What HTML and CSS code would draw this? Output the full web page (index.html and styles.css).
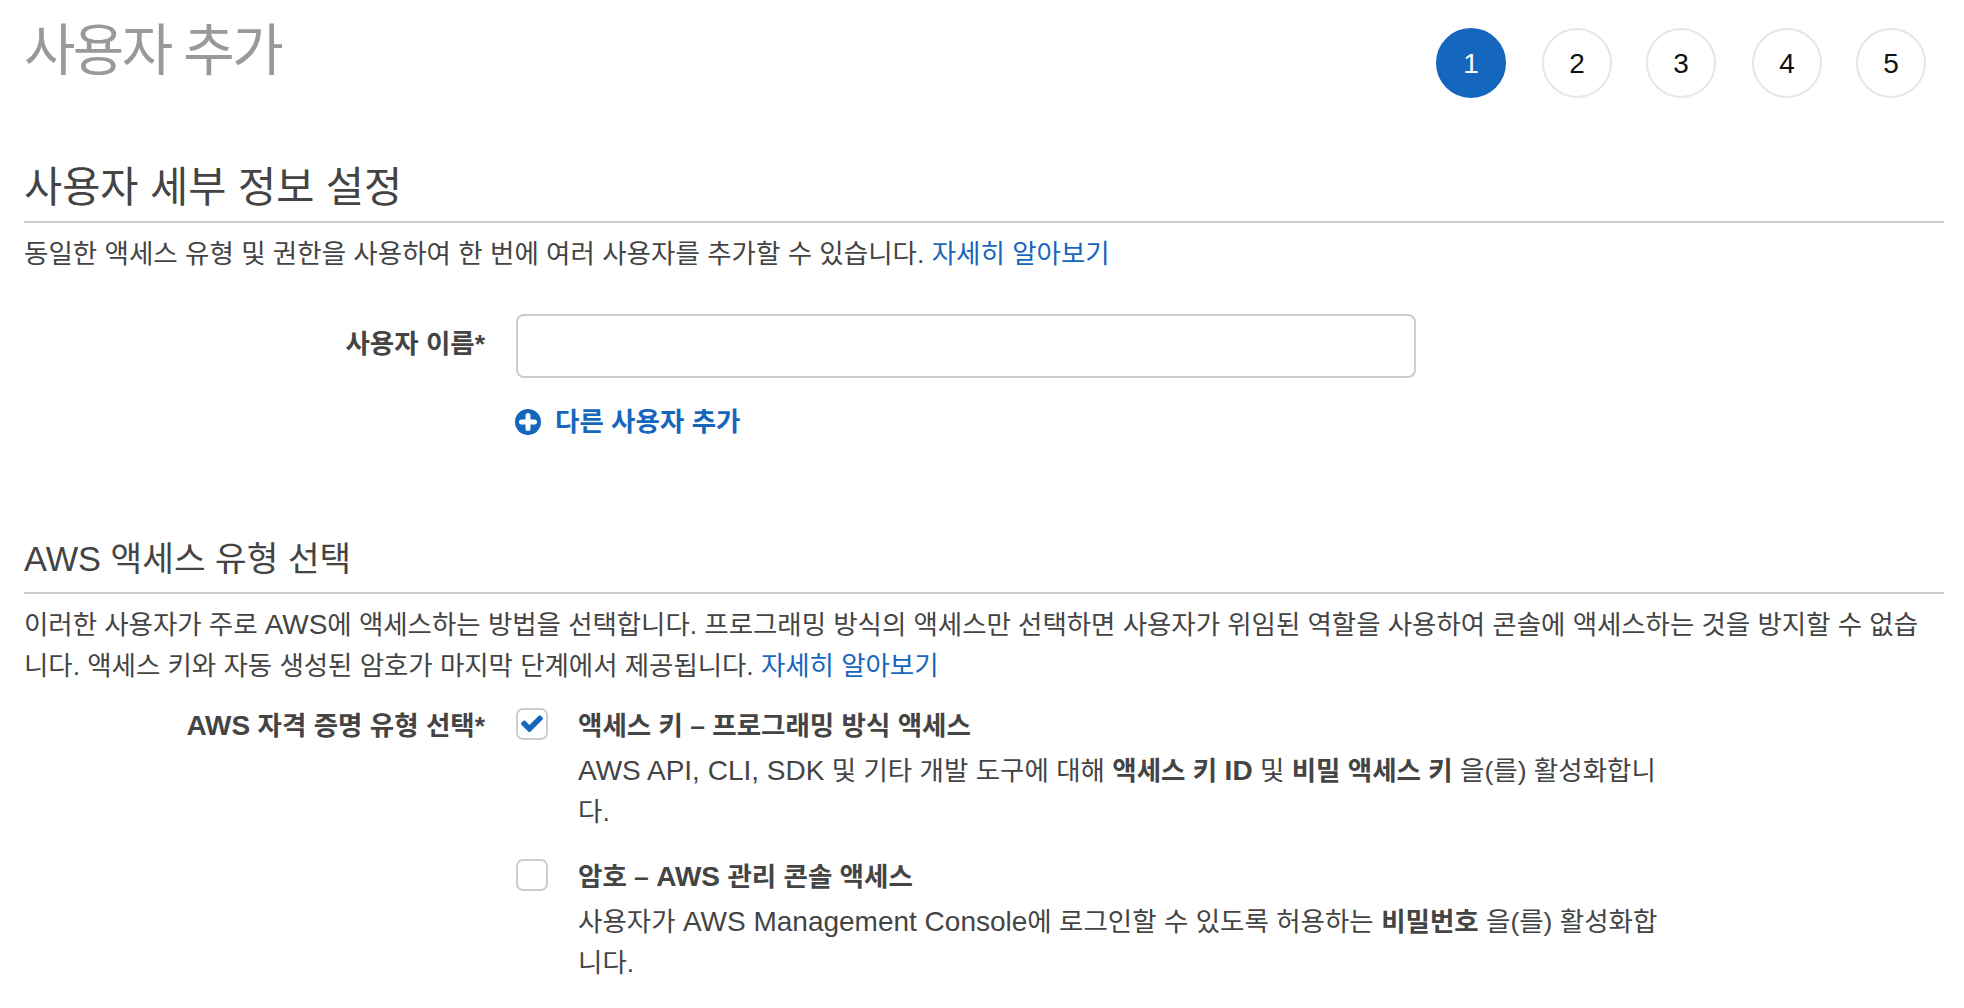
FILE: index.html
```html
<!DOCTYPE html>
<html lang="ko">
<head>
<meta charset="utf-8">
<title>사용자 추가</title>
<link rel="stylesheet" href="styles.css">
</head>
<body>
<div class="page">
  <header class="top">
    <h1 class="title">사용자 추가</h1>
    <ol class="steps">
      <li class="step active">1</li>
      <li class="step">2</li>
      <li class="step">3</li>
      <li class="step">4</li>
      <li class="step">5</li>
    </ol>
  </header>

  <section class="details">
    <h2 class="section-title">사용자 세부 정보 설정</h2>
    <p class="text">동일한 액세스 유형 및 권한을 사용하여 한 번에 여러 사용자를 추가할 수 있습니다. <a class="link" href="#">자세히 알아보기</a></p>
    <div class="form-row name-row">
      <label class="label">사용자 이름*</label>
      <div class="control"><input class="input" type="text"></div>
    </div>
    <div class="form-row add-row">
      <span></span>
      <a class="add" href="#">
        <svg class="add-icon" viewBox="0 0 26 26"><circle cx="13" cy="13" r="13" fill="#1566bd"/><path d="M13 6.5v13M6.5 13h13" stroke="#fff" stroke-width="5" stroke-linecap="round"/></svg>
        <span>다른 사용자 추가</span>
      </a>
    </div>
  </section>

  <section class="access">
    <h2 class="section-title small">AWS 액세스 유형 선택</h2>
    <p class="text wide">이러한 사용자가 주로 <span class="en">AWS</span>에 액세스하는 방법을 선택합니다. 프로그래밍 방식의 액세스만 선택하면 사용자가 위임된 역할을 사용하여 콘솔에 액세스하는 것을 방지할 수 없습니다. 액세스 키와 자동 생성된 암호가 마지막 단계에서 제공됩니다. <a class="link" href="#">자세히 알아보기</a></p>
    <div class="form-row cred-row">
      <label class="label"><span class="en">AWS</span> 자격 증명 유형 선택*</label>
      <div class="options">
        <div class="option">
          <span class="check">
            <svg class="tick" viewBox="121 400 1550 1100"><path fill="#1566bd" d="M1671 566q0 40-28 68l-724 724-136 136q-28 28-68 28t-68-28l-136-136-362-362q-28-28-28-68t28-68l136-136q28-28 68-28t68 28l294 295 656-657q28-28 68-28t68 28l136 136q28 28 28 68z"/></svg>
          </span>
          <div class="option-body">
            <div class="option-title">액세스 키 – 프로그래밍 방식 액세스</div>
            <div class="option-desc"><span class="en">AWS API, CLI, SDK</span> 및 기타 개발 도구에 대해 <b>액세스 키 <span class="en">ID</span></b> 및 <b>비밀 액세스 키</b> 을(를) 활성화합니다.</div>
          </div>
        </div>
        <div class="option">
          <span class="check"></span>
          <div class="option-body">
            <div class="option-title">암호 – <span class="en">AWS</span> 관리 콘솔 액세스</div>
            <div class="option-desc">사용자가 <span class="en">AWS Management Console</span>에 로그인할 수 있도록 허용하는 <b>비밀번호</b> 을(를) 활성화합니다.</div>
          </div>
        </div>
      </div>
    </div>
  </section>
</div>
</body>
</html>
```

FILE: styles.css
```css
* { box-sizing: border-box; }
html, body { margin: 0; height: 100%; }
body {
  background: #fff;
  color: #444;
  font-family: "Liberation Sans", "Noto Sans CJK KR", sans-serif;
  font-size: 26.5px;
  overflow: hidden;
}
.en { font-size: 28px; }
.page { padding: 0 20px 0 24px; }
.top {
  display: flex;
  justify-content: space-between;
  height: 150px;
}
.title {
  margin: 11px 0 0;
  font-size: 56px;
  line-height: 80px;
  font-weight: 400;
  letter-spacing: -2.7px;
  color: #999;
}
.steps {
  display: flex;
  gap: 35px;
  list-style: none;
  margin: 28px 18px 0 0;
  padding: 0;
}
.step {
  width: 70px;
  height: 70px;
  padding-top: 2px;
  border: 2px solid #e6e6e6;
  border-radius: 50%;
  display: flex;
  align-items: center;
  justify-content: center;
  color: #111;
  font-size: 28px;
}
.step:nth-child(even) { margin: 0 -1px 0 1px; }
.step.active { background: #1566bd; border-color: #1566bd; color: #fff; }
.section-title {
  margin: 0;
  height: 73px;
  padding-top: 10px;
  border-bottom: 2px solid #ccc;
  font-size: 41.5px;
  line-height: 56px;
  font-weight: 400;
  color: #444;
}
.section-title.small { font-size: 34.4px; height: 56px; line-height: 42px; padding-top: 0; }
.text { margin: 11px 0 0; line-height: 41px; word-break: break-all; }
.text.wide { margin-top: 10px; padding-right: 12px; letter-spacing: -0.06px; }
.link { color: #1566bd; text-decoration: none; }
.form-row {
  display: grid;
  grid-template-columns: 461px 1fr;
  column-gap: 31px;
}
.name-row { margin-top: 39px; }
.label { text-align: right; font-weight: 700; line-height: 60px; }
.input {
  display: block;
  width: 900px;
  height: 64px;
  border: 2px solid #ccc;
  border-radius: 8px;
  outline: none;
  background: #fff;
}
.add-row { margin-top: 26px; }
.add {
  display: flex;
  align-items: center;
  gap: 14px;
  color: #1566bd;
  font-weight: 700;
  text-decoration: none;
  margin-left: -1px;
  line-height: 36px;
}
.add-icon { width: 26px; height: 26px; }
.access { margin-top: 98px; }
.cred-row { margin-top: 19px; }
.cred-row .label { line-height: 40px; }
.options { display: flex; flex-direction: column; gap: 24px; }
.option { display: flex; gap: 30px; }
.check {
  flex: none;
  width: 32px;
  height: 32px;
  margin-top: 2px;
  border: 2px solid #ccc;
  border-radius: 7px;
  display: flex;
  align-items: center;
  justify-content: center;
}
.tick { width: 22px; height: 18px; }
.option-body { width: 1080px; word-break: break-all; }
.option-title { font-weight: 700; line-height: 40px; margin-bottom: 4px; }
.option-desc { line-height: 41px; }
```
